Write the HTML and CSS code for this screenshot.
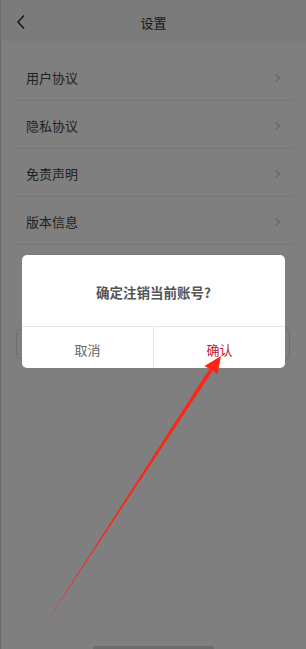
FILE: index.html
```
<!DOCTYPE html>
<html lang="zh-CN">
<head>
    <meta charset="UTF-8">
    <meta name="viewport" content="width=device-width, initial-scale=1.0">
    <title>设置</title>
    <link rel="stylesheet" href="styles.css">
</head>
<body>
    <div class="page">
        <div class="header">
            <svg class="back" width="10" height="16" viewBox="0 0 10 16">
                <path d="M8 1.5 L2 8 L8 14.5" fill="none" stroke="#222" stroke-width="1.4"/>
            </svg>
            <span class="title">设置</span>
        </div>

        <ul class="menu">
            <li class="menu-item"><span>用户协议</span><i class="arrow"></i></li>
            <li class="menu-item"><span>隐私协议</span><i class="arrow"></i></li>
            <li class="menu-item"><span>免责声明</span><i class="arrow"></i></li>
            <li class="menu-item"><span>版本信息</span><i class="arrow"></i></li>
        </ul>

        <div class="logout">注销账号</div>

        <div class="home-bar"></div>
    </div>

    <div class="mask"></div>

    <div class="dialog">
        <div class="dialog-msg">确定注销当前账号?</div>
        <div class="dialog-btns">
            <div class="btn cancel">取消</div>
            <div class="btn ok">确认</div>
        </div>
    </div>

    <!-- annotation arrow -->
    <svg class="pointer" width="306" height="649" viewBox="0 0 306 649">
        <polygon fill="#ff2414" points="42,629 212.4,371.2 209.3,369.1"/>
        <polygon fill="#ff2414" points="221,356 217.5,374.5 211,369.8 204.5,366"/>
    </svg>
</body>
</html>
```

FILE: styles.css
```
html, body {
    margin: 0;
    padding: 0;
}
body {
    font-family: "Noto Sans CJK SC", "Noto Sans", sans-serif;
    width: 306px;
    height: 649px;
    overflow: hidden;
    position: relative;
    background: #fff;
}
.page {
    height: 649px;
    display: flex;
    flex-direction: column;
    border-left: 1px solid #d4d4d4;
    box-sizing: border-box;
}
.header {
    height: 41px;
    padding-top: 3px;
    box-sizing: border-box;
    background: #f6f6f6;
    display: flex;
    align-items: center;
    justify-content: center;
    position: relative;
}
.back {
    position: absolute;
    left: 15px;
    top: 14px;
}
.title {
    font-size: 13px;
    color: #333;
}
.menu {
    list-style: none;
    margin: 12px 13px 0 14px;
    padding: 0;
}
.menu-item {
    height: 48px;
    border-bottom: 1px solid #ededed;
    box-sizing: border-box;
    display: flex;
    align-items: center;
    justify-content: space-between;
    padding: 2px 14px 0 11px;
    font-size: 13px;
    color: #444;
}
.arrow {
    width: 5px;
    height: 5px;
    border-top: 1px solid #c4c4c4;
    border-right: 1px solid #c4c4c4;
    transform: rotate(45deg);
}
.logout {
    margin: 84px 16px 0 15px;
    height: 28px;
    border: 1px solid #ddd;
    border-radius: 4px;
    display: flex;
    align-items: center;
    justify-content: center;
    font-size: 13px;
    color: #666;
}
.home-bar {
    margin: auto auto 0;
    width: 121px;
    height: 3px;
    background: #d8d8d8;
    border-radius: 2px 2px 0 0;
}
.mask {
    position: absolute;
    inset: 0;
    background: rgba(0, 0, 0, 0.5);
}
.dialog {
    position: absolute;
    left: 22px;
    top: 255px;
    width: 263px;
    background: #fff;
    border-radius: 5px;
    overflow: hidden;
}
.dialog-msg {
    height: 72px;
    display: flex;
    align-items: center;
    justify-content: center;
    font-size: 13.5px;
    font-weight: 600;
    color: #555;
    border-bottom: 1px solid #e6e6e6;
    box-sizing: border-box;
    padding-top: 2px;
}
.dialog-btns {
    display: flex;
    height: 41px;
}
.btn {
    flex: 1;
    display: flex;
    align-items: center;
    justify-content: center;
    font-size: 13px;
    padding-top: 3px;
}
.cancel {
    color: #666;
    border-right: 1px solid #e6e6e6;
}
.ok {
    color: #c0143c;
}
.pointer {
    position: absolute;
    left: 0;
    top: 0;
}
```
